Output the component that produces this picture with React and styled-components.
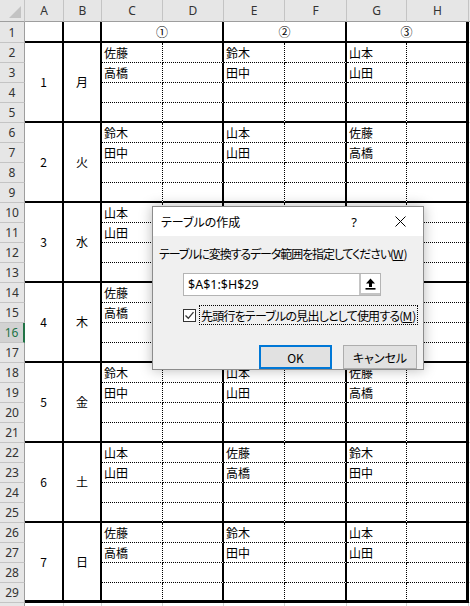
import React from 'react';
import styled, { createGlobalStyle } from 'styled-components';

const Global = createGlobalStyle`
  html, body {
    margin: 0;
    padding: 0;
    background: #ffffff;
    overflow: hidden;
  }
`;

const CJK = `"Noto Sans CJK JP", "Noto Sans", sans-serif`;

const lines = {
  none: 'none',
  grid: '1px solid #d4d4d4',
  dot: '1px dotted #000000',
  thick: '2px solid #000000',
  heavy: '3px solid #000000',
};

const Page = styled.div`
  position: relative;
  width: 470px;
  height: 606px;
  overflow: hidden;
  font-family: ${CJK};
`;

const Sheet = styled.div`
  display: grid;
  grid-template-columns: 25px 39px 38px 61px 61px 61px 62px 60px 62px 1fr;
  grid-template-rows: 22px 21px repeat(28, 20px) 20px;
  width: 470px;
`;

const Corner = styled.div`
  position: relative;
  background: #e6e6e6;
  border-right: 1px solid #c4c4c4;
  border-bottom: 1px solid #9e9e9e;
  box-sizing: border-box;

  &::after {
    content: '';
    position: absolute;
    right: 3px;
    bottom: 3px;
    width: 0;
    height: 0;
    border-left: 12px solid transparent;
    border-bottom: 12px solid #c3c3c3;
  }
`;

const ColHead = styled.div`
  display: flex;
  align-items: center;
  justify-content: center;
  background: #e6e6e6;
  border-right: 1px solid #c4c4c4;
  border-bottom: 1px solid #9e9e9e;
  box-sizing: border-box;
  font-family: "Noto Sans", "Liberation Sans", sans-serif;
  font-size: 12px;
  color: #333333;
`;

const RowHead = styled.div`
  grid-column: 1;
  grid-row: ${p => p.$row};
  display: flex;
  align-items: center;
  justify-content: center;
  background: ${p => (p.$active ? '#d2d2d2' : '#e6e6e6')};
  border-right: ${p => (p.$active ? '2px solid #217346' : '1px solid #9e9e9e')};
  border-bottom: 1px solid #c4c4c4;
  box-sizing: border-box;
  font-family: "Noto Sans", "Liberation Sans", sans-serif;
  font-size: 12px;
  color: ${p => (p.$active ? '#217346' : '#333333')};
`;

const Cell = styled.div`
  grid-column: ${p => p.$col} / span ${p => p.$cspan || 1};
  grid-row: ${p => p.$row} / span ${p => p.$rspan || 1};
  display: flex;
  align-items: center;
  justify-content: ${p => (p.$center ? 'center' : 'flex-start')};
  padding-left: ${p => (p.$center ? '0' : '2px')};
  box-sizing: border-box;
  border-right: ${p => lines[p.$r || 'none']};
  border-bottom: ${p => lines[p.$b || 'none']};
  font-size: 12px;
  line-height: 1;
  color: #000000;
  white-space: nowrap;
  overflow: hidden;
`;

const Dialog = styled.div`
  position: absolute;
  left: 152px;
  top: 206px;
  width: 272px;
  height: 164px;
  box-sizing: border-box;
  border: 1px solid #8c8c8c;
  background: #f0f0f0;
  box-shadow: 0 0 12px rgba(0, 0, 0, 0.28);
  display: flex;
  flex-direction: column;
  font-family: ${CJK};
  font-feature-settings: 'palt';
  font-size: 12px;
  color: #000000;
`;

const TitleBar = styled.div`
  height: 29px;
  background: #ffffff;
  display: flex;
  align-items: center;
  padding-left: 8px;
`;

const Title = styled.div`
  flex: 1;
  font-size: 12px;
`;

const TitleBtn = styled.div`
  width: 46px;
  height: 29px;
  display: flex;
  align-items: center;
  justify-content: center;
  font-family: "Noto Sans", sans-serif;
  font-size: 13px;
`;

const Body = styled.div`
  flex: 1;
  display: flex;
  flex-direction: column;
  padding: 9px 6px 0 6px;
`;

const Label = styled.div`
  height: 16px;
  display: flex;
  align-items: center;
  white-space: nowrap;
  letter-spacing: -1.1px;
`;

const Key = styled.span`
  text-decoration: underline;
  letter-spacing: 0;
`;

const RangeBox = styled.div`
  margin: 12px 0 0 24px;
  width: 198px;
  height: 23px;
  box-sizing: border-box;
  border: 1px solid #b4b4b4;
  background: #ffffff;
  display: flex;
`;

const RangeText = styled.div`
  flex: 1;
  display: flex;
  align-items: center;
  padding-left: 4px;
  font-family: "Noto Sans", "Liberation Sans", sans-serif;
  font-size: 12.5px;
`;

const PickBtn = styled.div`
  width: 21px;
  box-sizing: border-box;
  border: 2px solid #c4c4c4;
  border-right: none;
  border-top: none;
  background: #ffffff;
  display: flex;
  align-items: center;
  justify-content: center;
`;

const CheckRow = styled.div`
  margin: 9px 0 0 24px;
  display: flex;
  align-items: center;
  gap: 3px;
  height: 20px;
`;

const Box = styled.div`
  width: 13px;
  height: 13px;
  box-sizing: border-box;
  border: 1px solid #333333;
  background: #ffffff;
  display: flex;
  align-items: center;
  justify-content: center;
`;

const Focus = styled.div`
  width: 219px;
  height: 20px;
  box-sizing: border-box;
  border: 1px dotted #000000;
  padding: 0 1px;
  display: flex;
  align-items: center;
  white-space: nowrap;
  letter-spacing: -0.8px;
`;

const Buttons = styled.div`
  margin-top: 20px;
  display: flex;
  justify-content: flex-end;
  gap: 11px;
`;

const Button = styled.div`
  width: ${p => p.$w}px;
  height: 24px;
  box-sizing: border-box;
  border: ${p => (p.$primary ? '2px solid #0078d7' : '1px solid #adadad')};
  background: #e1e1e1;
  display: flex;
  align-items: center;
  justify-content: center;
  font-size: 12px;
`;

const groups = [
  { no: '1', day: '月', c: ['佐藤', '高橋'], e: ['鈴木', '田中'], g: ['山本', '山田'] },
  { no: '2', day: '火', c: ['鈴木', '田中'], e: ['山本', '山田'], g: ['佐藤', '高橋'] },
  { no: '3', day: '水', c: ['山本', '山田'], e: ['佐藤', '高橋'], g: ['鈴木', '田中'] },
  { no: '4', day: '木', c: ['佐藤', '高橋'], e: ['鈴木', '田中'], g: ['山本', '山田'] },
  { no: '5', day: '金', c: ['鈴木', '田中'], e: ['山本', '山田'], g: ['佐藤', '高橋'] },
  { no: '6', day: '土', c: ['山本', '山田'], e: ['佐藤', '高橋'], g: ['鈴木', '田中'] },
  { no: '7', day: '日', c: ['佐藤', '高橋'], e: ['鈴木', '田中'], g: ['山本', '山田'] },
];

const letters = ['A', 'B', 'C', 'D', 'E', 'F', 'G', 'H', ''];

function buildCells() {
  const cells = [];
  // row 1 (grid row 2)
  cells.push(<Cell key="a1" $col={2} $row={2} $r="thick" $b="thick" />);
  cells.push(<Cell key="b1" $col={3} $row={2} $r="thick" $b="thick" />);
  cells.push(<Cell key="c1" $col={4} $cspan={2} $row={2} $r="thick" $b="thick" $center>①</Cell>);
  cells.push(<Cell key="e1" $col={6} $cspan={2} $row={2} $r="thick" $b="thick" $center>②</Cell>);
  cells.push(<Cell key="g1" $col={8} $cspan={2} $row={2} $r="heavy" $b="thick" $center>③</Cell>);
  cells.push(<Cell key="i1" $col={10} $row={2} $r="grid" $b="grid" />);

  groups.forEach((g, gi) => {
    const start = 3 + gi * 4;
    const last = gi === groups.length - 1;
    const edge = last ? 'heavy' : 'thick';
    cells.push(<Cell key={`a${gi}`} $col={2} $row={start} $rspan={4} $r="thick" $b={edge} $center>{g.no}</Cell>);
    cells.push(<Cell key={`b${gi}`} $col={3} $row={start} $rspan={4} $r="thick" $b={edge} $center>{g.day}</Cell>);
    for (let i = 0; i < 4; i++) {
      const row = start + i;
      const b = i < 3 ? 'dot' : edge;
      const k = `${gi}-${i}`;
      cells.push(<Cell key={`c${k}`} $col={4} $row={row} $r="dot" $b={b}>{g.c[i]}</Cell>);
      cells.push(<Cell key={`d${k}`} $col={5} $row={row} $r="thick" $b={b} />);
      cells.push(<Cell key={`e${k}`} $col={6} $row={row} $r="dot" $b={b}>{g.e[i]}</Cell>);
      cells.push(<Cell key={`f${k}`} $col={7} $row={row} $r="thick" $b={b} />);
      cells.push(<Cell key={`g${k}`} $col={8} $row={row} $r="dot" $b={b}>{g.g[i]}</Cell>);
      cells.push(<Cell key={`h${k}`} $col={9} $row={row} $r="heavy" $b={b} />);
      cells.push(<Cell key={`i${k}`} $col={10} $row={row} $r="grid" $b="grid" />);
    }
  });

  // row 30, cut off by the window
  for (let c = 2; c <= 10; c++) {
    cells.push(<Cell key={`r30-${c}`} $col={c} $row={31} $r="grid" />);
  }
  return cells;
}

export default function App() {
  const rowNumbers = Array.from({ length: 30 }, (_, i) => i + 1);
  return (
    <Page>
      <Global />
      <Sheet>
        <Corner />
        {letters.map((l, i) => (
          <ColHead key={`h${i}`}>{l}</ColHead>
        ))}
        {rowNumbers.map(n => (
          <RowHead key={`r${n}`} $row={n + 1} $active={n === 16}>
            {n < 30 ? n : ''}
          </RowHead>
        ))}
        {buildCells()}
      </Sheet>

      <Dialog>
        <TitleBar>
          <Title>テーブルの作成</Title>
          <TitleBtn>?</TitleBtn>
          <TitleBtn>
            <svg width="11" height="11" viewBox="0 0 11 11">
              <path d="M0.5 0.5 L10.5 10.5 M10.5 0.5 L0.5 10.5" stroke="#000" strokeWidth="1" fill="none" />
            </svg>
          </TitleBtn>
        </TitleBar>
        <Body>
          <Label>
            テーブルに変換するデータ範囲を指定してください(<Key>W</Key>)
          </Label>
          <RangeBox>
            <RangeText>$A$1:$H$29</RangeText>
            <PickBtn>
              <svg width="11" height="12" viewBox="0 0 11 12">
                <path d="M5.5 0.5 L10 5.5 L7 5.5 L7 9 L4 9 L4 5.5 L1 5.5 Z" fill="#000" />
                <rect x="0.5" y="10" width="10" height="1.6" fill="#000" />
              </svg>
            </PickBtn>
          </RangeBox>
          <CheckRow>
            <Box>
              <svg width="11" height="11" viewBox="0 0 11 11">
                <path d="M1.5 5.5 L4.3 8.3 L9.5 2.2" stroke="#333" strokeWidth="1.3" fill="none" />
              </svg>
            </Box>
            <Focus>
              先頭行をテーブルの見出しとして使用する(<Key>M</Key>)
            </Focus>
          </CheckRow>
          <Buttons>
            <Button $primary $w={73}>OK</Button>
            <Button $w={74}>キャンセル</Button>
          </Buttons>
        </Body>
      </Dialog>
    </Page>
  );
}
